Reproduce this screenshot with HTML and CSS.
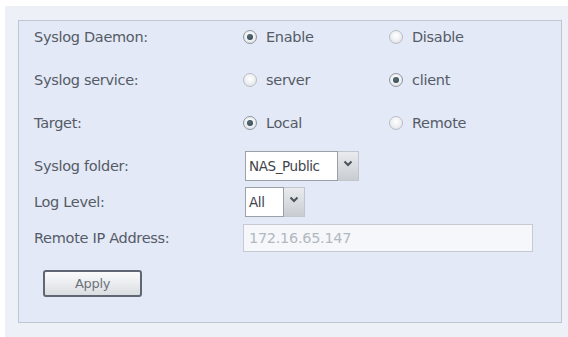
FILE: index.html
```html
<!DOCTYPE html>
<html>
<head>
<meta charset="utf-8">
<link rel="stylesheet" href="styles.css">
</head>
<body>
<div class="page">
  <div class="panel">
    <div class="row gap-l">
      <div class="label">Syslog Daemon:</div>
      <div class="opts">
        <label class="opt"><span class="radio on"></span>Enable</label>
        <label class="opt"><span class="radio"></span>Disable</label>
      </div>
    </div>
    <div class="row gap-l">
      <div class="label">Syslog service:</div>
      <div class="opts">
        <label class="opt"><span class="radio"></span>server</label>
        <label class="opt"><span class="radio on"></span>client</label>
      </div>
    </div>
    <div class="row gap-l">
      <div class="label">Target:</div>
      <div class="opts">
        <label class="opt"><span class="radio on"></span>Local</label>
        <label class="opt"><span class="radio"></span>Remote</label>
      </div>
    </div>
    <div class="row gap-s">
      <div class="label">Syslog folder:</div>
      <div class="select wide"><span class="val">NAS_Public</span><span class="arrow"><svg width="10" height="7" viewBox="0 0 10 7"><path d="M1.5 1.5 L5 5 L8.5 1.5" fill="none" stroke="#4a525c" stroke-width="2"/></svg></span></div>
    </div>
    <div class="row gap-s">
      <div class="label">Log Level:</div>
      <div class="select narrow"><span class="val">All</span><span class="arrow"><svg width="10" height="7" viewBox="0 0 10 7"><path d="M1.5 1.5 L5 5 L8.5 1.5" fill="none" stroke="#4a525c" stroke-width="2"/></svg></span></div>
    </div>
    <div class="row">
      <div class="label">Remote IP Address:</div>
      <div class="ip">172.16.65.147</div>
    </div>
    <button class="apply">Apply</button>
  </div>
</div>
</body>
</html>
```
FILE: styles.css
```css
html, body {
  margin: 0;
  padding: 0;
  background: #ffffff;
  height: 337px;
  overflow: hidden;
}
.page {
  margin: 6px 0 0 5px;
  background: #edf0f7;
  padding: 14px 6px 14px 13px;
  font-family: "DejaVu Sans", Verdana, sans-serif;
  font-size: 14.5px;
  letter-spacing: -0.3px;
  color: #555b66;
}
.panel {
  border: 1px solid #bfc6d2;
  background: #e3e9f6;
  padding: 0 0 25px 15px;
}
.row {
  height: 32px;
  display: flex;
  align-items: center;
}
.gap-l { margin-bottom: 11px; }
.gap-s { margin-bottom: 4px; }
.label {
  width: 209px;
  flex: none;
}
.opts {
  display: flex;
  align-items: center;
}
.opt {
  width: 146px;
  display: flex;
  align-items: center;
  gap: 9px;
  color: #555b66;
}
.radio {
  width: 12px;
  height: 12px;
  border-radius: 50%;
  border: 1px solid #b9bec6;
  background: radial-gradient(circle at 50% 40%, #ffffff 0%, #eceef1 55%, #d3d7dc 100%);
  position: relative;
  flex: none;
}
.radio.on {
  border-color: #8e969f;
}
.radio.on::after {
  content: "";
  position: absolute;
  left: 3px;
  top: 3px;
  width: 6px;
  height: 6px;
  border-radius: 50%;
  background: radial-gradient(circle at 45% 40%, #59707c 0%, #2c3a44 100%);
}
.select {
  display: flex;
  height: 30px;
  margin-left: 2px;
}
.select .val {
  border: 1px solid #9aa0a8;
  background: #ffffff;
  color: #3e444c;
  display: flex;
  align-items: center;
  padding-left: 3px;
  box-sizing: border-box;
  font-size: 13.5px;
  letter-spacing: -0.4px;
}
.select.wide .val { width: 93px; }
.select.narrow .val { width: 39px; }
.select .arrow {
  width: 21px;
  background: linear-gradient(#e9ebee, #c9cdd2);
  border: 1px solid #c2c6cc;
  border-left: none;
  box-sizing: border-box;
  display: flex;
  align-items: flex-start;
  justify-content: center;
  padding-top: 8px;
}
.ip {
  width: 290px;
  height: 28px;
  box-sizing: border-box;
  border: 1px solid #c5cad2;
  background: #f5f7fb;
  color: #b3b7be;
  display: flex;
  align-items: center;
  padding-left: 5px;
}
.apply {
  margin: 16px 0 0 9px;
  width: 99px;
  height: 27px;
  border: 2px solid #5f6872;
  border-radius: 3px;
  background: linear-gradient(#fbfbfc, #dadde1);
  font-family: "DejaVu Sans", Verdana, sans-serif;
  font-size: 13px;
  letter-spacing: -0.3px;
  color: #6d737b;
  padding: 0;
}
```
